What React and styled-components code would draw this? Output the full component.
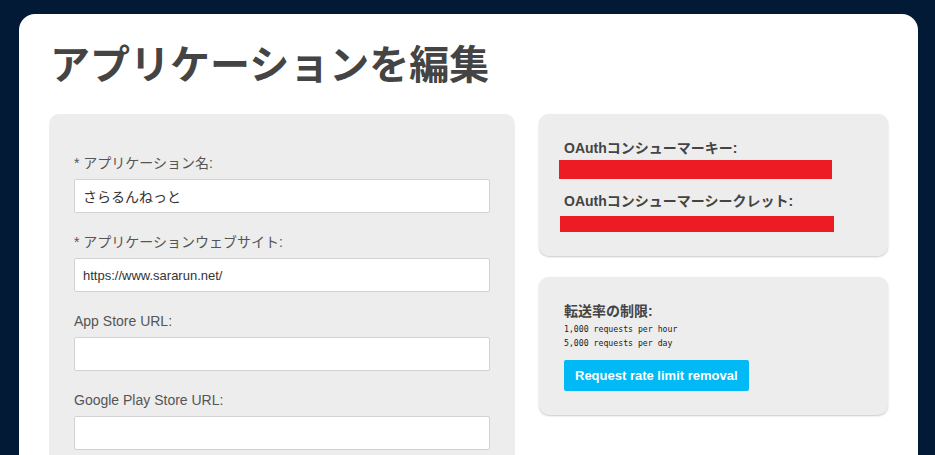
import React from "react";
import styled, { createGlobalStyle } from "styled-components";

const GlobalStyle = createGlobalStyle`
  html, body {
    margin: 0;
    height: 100%;
    overflow: hidden;
    background: #021a35;
  }
  body {
    padding: 14px 17px 0 19px;
    box-sizing: border-box;
    font-family: "Liberation Sans", "Noto Sans CJK JP", sans-serif;
    color: #555;
  }
`;

const fields = [
  { label: "* アプリケーション名:", value: "さらるんねっと", jp: true },
  { label: "* アプリケーションウェブサイト:", value: "https://www.sararun.net/" },
  { label: "App Store URL:", value: "" },
  { label: "Google Play Store URL:", value: "" },
];

const App = () => {
  return (
    <>
      <GlobalStyle />
      <Card>
        <Title>アプリケーションを編集</Title>
        <Columns>
          <FormPanel>
            {fields.map((f) => (
              <Field key={f.label}>
                <Label>{f.label}</Label>
                <Input defaultValue={f.value} $jp={f.jp} />
              </Field>
            ))}
          </FormPanel>
          <Side>
            <Panel>
              <Heading>OAuthコンシューマーキー:</Heading>
              <Redacted $w={273} $h={19} $top={2} $left={-5} />
              <Heading $top={12}>OAuthコンシューマーシークレット:</Heading>
              <Redacted $w={274} $h={16} $top={5} $left={-4} />
            </Panel>
            <Panel>
              <Heading>転送率の制限:</Heading>
              <Mono>
                1,000 requests per hour
                <br />
                5,000 requests per day
              </Mono>
              <RateButton>Request rate limit removal</RateButton>
            </Panel>
          </Side>
        </Columns>
      </Card>
    </>
  );
};

const Card = styled.div`
  background: #fff;
  border-radius: 16px 16px 0 0;
  padding: 20px 30px 40px 30px;
  min-height: 600px;
  box-sizing: border-box;
`;

const Title = styled.h1`
  margin: 0 0 24px 1px;
  font-family: "Noto Sans CJK JP", sans-serif;
  font-size: 40px;
  line-height: 56px;
  font-weight: 700;
  color: #444;
`;

const Columns = styled.div`
  display: grid;
  grid-template-columns: 466px 1fr;
  gap: 24px;
  align-items: start;
`;

const FormPanel = styled.div`
  background: #ededed;
  border-radius: 10px;
  padding: 39px 25px 20px 25px;
`;

const Field = styled.div`
  margin-bottom: 19px;
`;

const Label = styled.div`
  font-size: 14px;
  line-height: 20px;
  color: #555;
  margin-bottom: 6px;
`;

const Input = styled.input`
  display: block;
  width: 100%;
  height: 34px;
  box-sizing: border-box;
  border: 1px solid #d2d2d2;
  border-radius: 2px;
  background: #fff;
  padding: 0 8px;
  font-family: "Liberation Sans", "Noto Sans CJK JP", sans-serif;
  font-size: ${(p) => (p.$jp ? "14px" : "13px")};
  color: #333;
  outline: none;
`;

const Side = styled.div`
  display: flex;
  flex-direction: column;
  gap: 21px;
`;

const Panel = styled.div`
  background: #ededed;
  border-radius: 10px;
  padding: 24px 25px 24px 25px;
  box-shadow: 0 1px 2px rgba(0, 0, 0, 0.22);
`;

const Heading = styled.div`
  font-size: 14px;
  line-height: 20px;
  font-weight: 700;
  color: #444;
  margin-top: ${(p) => p.$top || 0}px;
`;

const Redacted = styled.div`
  width: ${(p) => p.$w}px;
  height: ${(p) => p.$h}px;
  margin: ${(p) => p.$top}px 0 0 ${(p) => p.$left}px;
  background: #ed1c24;
`;

const Mono = styled.div`
  margin-top: 1px;
  font-family: "DejaVu Sans Mono", "Liberation Mono", monospace;
  font-size: 8.2px;
  line-height: 14px;
  color: #222;
`;

const RateButton = styled.button`
  display: block;
  margin-top: 10px;
  height: 31px;
  padding: 0 11px;
  border: none;
  border-radius: 2px;
  background: #00b9f5;
  color: #fff;
  font-family: "Liberation Sans", sans-serif;
  font-size: 13px;
  font-weight: 700;
  cursor: pointer;
`;

export default App;
